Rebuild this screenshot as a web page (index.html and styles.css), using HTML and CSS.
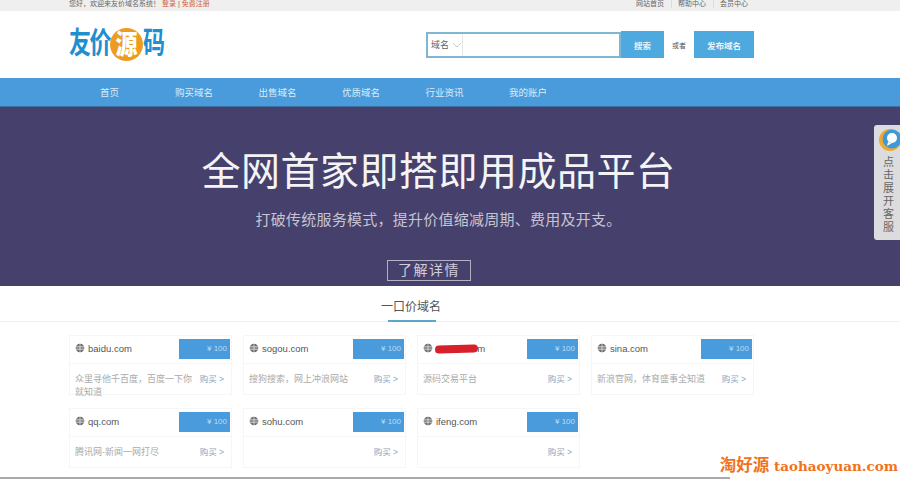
FILE: index.html

```html
<!DOCTYPE html>
<html lang="zh-CN">
<head>
  <meta charset="UTF-8" />
  <title>友价源码</title>
  <link rel="stylesheet" href="styles.css">
</head>
<body>
  <div class="topbar">
    <div class="wrap topbar-in">
      <div class="welcome">您好，欢迎来友价域名系统！ <a class="red">登录</a> | <a class="red">免费注册</a></div>
      <div class="toplinks"><a>网站首页</a><a>帮助中心</a><a>会员中心</a></div>
    </div>
  </div>

  <header class="header">
    <div class="wrap header-in">
      <div class="logo"><span class="logo-a">友价</span><span class="logo-b"><b>源</b></span><span class="logo-c">码</span></div>
      <div class="search">
        <div class="search-box">
          <span class="search-type">域名
            <svg width="10" height="6" viewBox="0 0 10 6"><path d="M1 1l4 4 4-4" fill="none" stroke="#c4ccd2" stroke-width="1"/></svg>
          </span>
          <span class="search-input"></span>
        </div>
        <button class="btn btn-search">搜索</button>
        <span class="or">或者</span>
        <button class="btn btn-post">发布域名</button>
      </div>
    </div>
  </header>

  <nav class="nav">
    <div class="wrap nav-in">
      <a>首页</a><a>购买域名</a><a>出售域名</a><a>优质域名</a><a>行业资讯</a><a>我的账户</a>
    </div>
  </nav>

  <section class="banner">
    <h1>全网首家即搭即用成品平台</h1>
    <p>打破传统服务模式，提升价值缩减周期、费用及开支。</p>
    <a class="more">了解详情</a>
  </section>

  <div class="kefu">
    <svg width="24" height="24" viewBox="0 0 24 24">
      <circle cx="12" cy="12" r="11" fill="#f0a92e"/>
      <circle cx="14" cy="11" r="9.5" fill="#3d9ad8"/>
      <circle cx="14" cy="10" r="5" fill="#fff"/>
      <path d="M10 14l-1 4 5-3z" fill="#fff"/>
    </svg>
    <span>点击展开客服</span>
  </div>

  <section class="domains">
    <div class="section-title"><h2>一口价域名</h2></div>
    <div class="wrap grid">
      <div class="card">
        <div class="card-head">
          <span class="name"><svg class="globe" viewBox="0 0 12 12"><use href="#globe"/></svg>baidu.com</span>
          <span class="price">¥ 100</span>
        </div>
        <div class="card-body"><span class="desc">众里寻他千百度，百度一下你就知道</span><a class="buy">购买 &gt;</a></div>
      </div>
      <div class="card">
        <div class="card-head">
          <span class="name"><svg class="globe" viewBox="0 0 12 12"><use href="#globe"/></svg>sogou.com</span>
          <span class="price">¥ 100</span>
        </div>
        <div class="card-body"><span class="desc">搜狗搜索，网上冲浪网站</span><a class="buy">购买 &gt;</a></div>
      </div>
      <div class="card">
        <div class="card-head">
          <span class="name"><svg class="globe" viewBox="0 0 12 12"><use href="#globe"/></svg><span class="hidden-name">xxxxxx.com<i class="scribble"></i></span></span>
          <span class="price">¥ 100</span>
        </div>
        <div class="card-body"><span class="desc">源码交易平台</span><a class="buy">购买 &gt;</a></div>
      </div>
      <div class="card">
        <div class="card-head">
          <span class="name"><svg class="globe" viewBox="0 0 12 12"><use href="#globe"/></svg>sina.com</span>
          <span class="price">¥ 100</span>
        </div>
        <div class="card-body"><span class="desc">新浪官网，体育盛事全知道</span><a class="buy">购买 &gt;</a></div>
      </div>
      <div class="card">
        <div class="card-head">
          <span class="name"><svg class="globe" viewBox="0 0 12 12"><use href="#globe"/></svg>qq.com</span>
          <span class="price">¥ 100</span>
        </div>
        <div class="card-body"><span class="desc">腾讯网-新闻一网打尽</span><a class="buy">购买 &gt;</a></div>
      </div>
      <div class="card">
        <div class="card-head">
          <span class="name"><svg class="globe" viewBox="0 0 12 12"><use href="#globe"/></svg>sohu.com</span>
          <span class="price">¥ 100</span>
        </div>
        <div class="card-body"><span class="desc"></span><a class="buy">购买 &gt;</a></div>
      </div>
      <div class="card">
        <div class="card-head">
          <span class="name"><svg class="globe" viewBox="0 0 12 12"><use href="#globe"/></svg>ifeng.com</span>
          <span class="price">¥ 100</span>
        </div>
        <div class="card-body"><span class="desc"></span><a class="buy">购买 &gt;</a></div>
      </div>
    </div>
  </section>

  <div class="watermark"><span class="wm-cn">淘好源</span> taohaoyuan.com</div>
  <div class="bottom-line"></div>

  <svg width="0" height="0" class="defs">
    <symbol id="globe" viewBox="0 0 12 12">
      <circle cx="6" cy="6" r="5.2" fill="#666"/>
      <path d="M.8 4h10.4M.8 6h10.4M.8 8h10.4M6 .8v10.4" stroke="#fff" stroke-width=".7" fill="none"/>
    </symbol>
  </svg>
</body>
</html>
```

FILE: styles.css

```css
* {
  box-sizing: border-box;
}
html, body {
  height: 479px;
  overflow: hidden;
}
body {
  margin: 0;
  position: relative;
  background: #fff;
  font-family: "Liberation Sans", "Noto Sans CJK SC", sans-serif;
  color: #555;
}
.wrap {
  width: 685px;
  margin-left: 69px;
}

/* top bar */
.topbar {
  height: 11px;
  background: #efefef;
  font-size: 7px;
  line-height: 8px;
  color: #666;
}
.topbar-in {
  display: flex;
  justify-content: space-between;
}
.red {
  color: #d2623c;
}
.toplinks {
  display: flex;
  margin-right: 6px;
}
.toplinks a + a {
  margin-left: 7px;
  padding-left: 6px;
  border-left: 1px solid #ddd;
}

/* header */
.header {
  height: 67px;
}
.header-in {
  height: 100%;
  display: flex;
  justify-content: space-between;
  align-items: center;
}
.logo {
  display: flex;
  align-items: center;
  margin-top: -1px;
  font-weight: bold;
  font-size: 22px;
  line-height: 36px;
}
.logo-a {
  display: block;
  width: 41px;
  letter-spacing: -1.5px;
  color: #1f8fcf;
  transform: scaleY(1.35);
}
.logo-b {
  width: 33px;
  height: 33px;
  border-radius: 50%;
  background: #ee9c1f;
  color: #fff;
  line-height: 33px;
  text-align: center;
}
.logo-b b {
  display: block;
  transform: scaleY(1.25);
}
.logo-c {
  display: block;
  color: #1f8fcf;
  transform: scaleY(1.35);
}
.search {
  display: flex;
  align-items: center;
}
.search-box {
  width: 195px;
  height: 26px;
  display: flex;
  border: 2px solid #7fb6d2;
}
.search-type {
  width: 35px;
  display: flex;
  align-items: center;
  gap: 3px;
  padding-left: 3px;
  border-right: 1px solid #e4e8ea;
  font-size: 9px;
  color: #666;
}
.search-input {
  flex: 1;
}
.btn {
  border: 0;
  padding: 0;
  height: 27px;
  background: #4ea9df;
  color: #e8f4fb;
  font-family: inherit;
  font-weight: bold;
  font-size: 8.5px;
}
.btn-search {
  width: 43px;
}
.or {
  width: 30px;
  text-align: center;
  font-size: 7px;
  color: #555;
}
.btn-post {
  width: 60px;
}

/* nav */
.nav {
  height: 29px;
  background: #4a9bdb;
  border-bottom: 1px solid #3f6f9f;
}
.nav-in {
  height: 100%;
  display: flex;
  align-items: center;
  padding-left: 31px;
  font-size: 9.5px;
  color: #dcebf7;
}
.nav-in a {
  width: 83.5px;
}
.nav-in a:first-child {
  width: 75px;
}

/* banner */
.banner {
  height: 179px;
  padding-right: 23px;
  background: #46406c;
  color: #f4f4f6;
  text-align: center;
  overflow: hidden;
}
.banner h1 {
  margin: 42px 0 0;
  font-weight: normal;
  font-size: 39px;
  line-height: 46px;
  letter-spacing: .5px;
}
.banner p {
  margin: 15px 0 0;
  font-size: 15px;
  line-height: 20px;
  letter-spacing: .25px;
  color: #c6c4d2;
}
.more {
  display: block;
  width: 84px;
  height: 21px;
  margin: 30px 0 0 387px;
  border: 1px solid #b3b0c6;
  font-size: 14px;
  line-height: 19px;
  letter-spacing: 1.5px;
  color: #d0cedc;
}

/* customer service tab */
.kefu {
  position: absolute;
  top: 125px;
  right: 0;
  width: 26px;
  height: 115px;
  padding-left: 3px;
  border-radius: 3px 0 0 3px;
  background: #dcdcde;
  color: #666;
  font-size: 11px;
  line-height: 13px;
  text-align: center;
}
.kefu svg {
  display: block;
  margin: 3px 0 0 1px;
}
.kefu span {
  display: block;
  width: 13px;
  margin: 4px 0 0 5px;
}

/* domains */
.section-title {
  height: 36px;
  border-bottom: 1px solid #f0f0f0;
}
.section-title h2 {
  width: 60px;
  margin: 0 0 0 381px;
  padding-top: 11px;
  font-weight: normal;
  font-size: 12px;
  line-height: 20px;
  color: #555;
}
.section-title h2::after {
  content: "";
  display: block;
  width: 48px;
  height: 2px;
  margin: 3px 0 0 7px;
  background: #5aa7c9;
}
.grid {
  display: grid;
  grid-template-columns: repeat(4, 163px);
  column-gap: 11px;
  row-gap: 13px;
  margin-top: 13px;
}
.card {
  height: 60px;
  border: 1px solid #f6f6f6;
}
.card-head {
  height: 28px;
  display: flex;
  justify-content: space-between;
  padding-bottom: 3px;
  border-bottom: 1px solid #f6f6f6;
}
.name {
  display: flex;
  align-items: center;
  gap: 3px;
  padding-left: 5px;
  font-size: 9.5px;
  color: #555;
}
.globe {
  width: 10px;
  height: 10px;
}
.hidden-name {
  position: relative;
}
.scribble {
  position: absolute;
  left: -1px;
  top: 2px;
  width: 43px;
  height: 8px;
  border-radius: 4px;
  background: #d8202a;
  transform: rotate(-2deg);
}
.price {
  width: 51px;
  height: 20px;
  margin: 3px 1px 0 0;
  padding-right: 3px;
  background: #4a9bdb;
  color: #bcdcf3;
  font-size: 8px;
  line-height: 20px;
  text-align: right;
}
.card-body {
  display: flex;
  align-items: flex-start;
  padding: 9px 7px 0 5px;
}
.desc {
  flex: 1;
  font-size: 9px;
  line-height: 13px;
  color: #aaa;
}
.buy {
  margin-left: 6px;
  font-size: 8.5px;
  line-height: 13px;
  color: #8ba6c0;
  white-space: nowrap;
}

/* image watermark and crop edge */
.watermark {
  position: absolute;
  right: 2px;
  top: 455px;
  font-family: "DejaVu Serif", "Noto Sans CJK SC", serif;
  font-weight: bold;
  font-size: 13.5px;
  line-height: 18px;
  color: #f0731c;
}
.wm-cn {
  font-family: "Noto Sans CJK SC", sans-serif;
  font-size: 16.5px;
}
.bottom-line {
  position: absolute;
  left: 0;
  top: 477px;
  width: 730px;
  height: 2px;
  background: #aaa;
}
.defs {
  position: absolute;
}
```
